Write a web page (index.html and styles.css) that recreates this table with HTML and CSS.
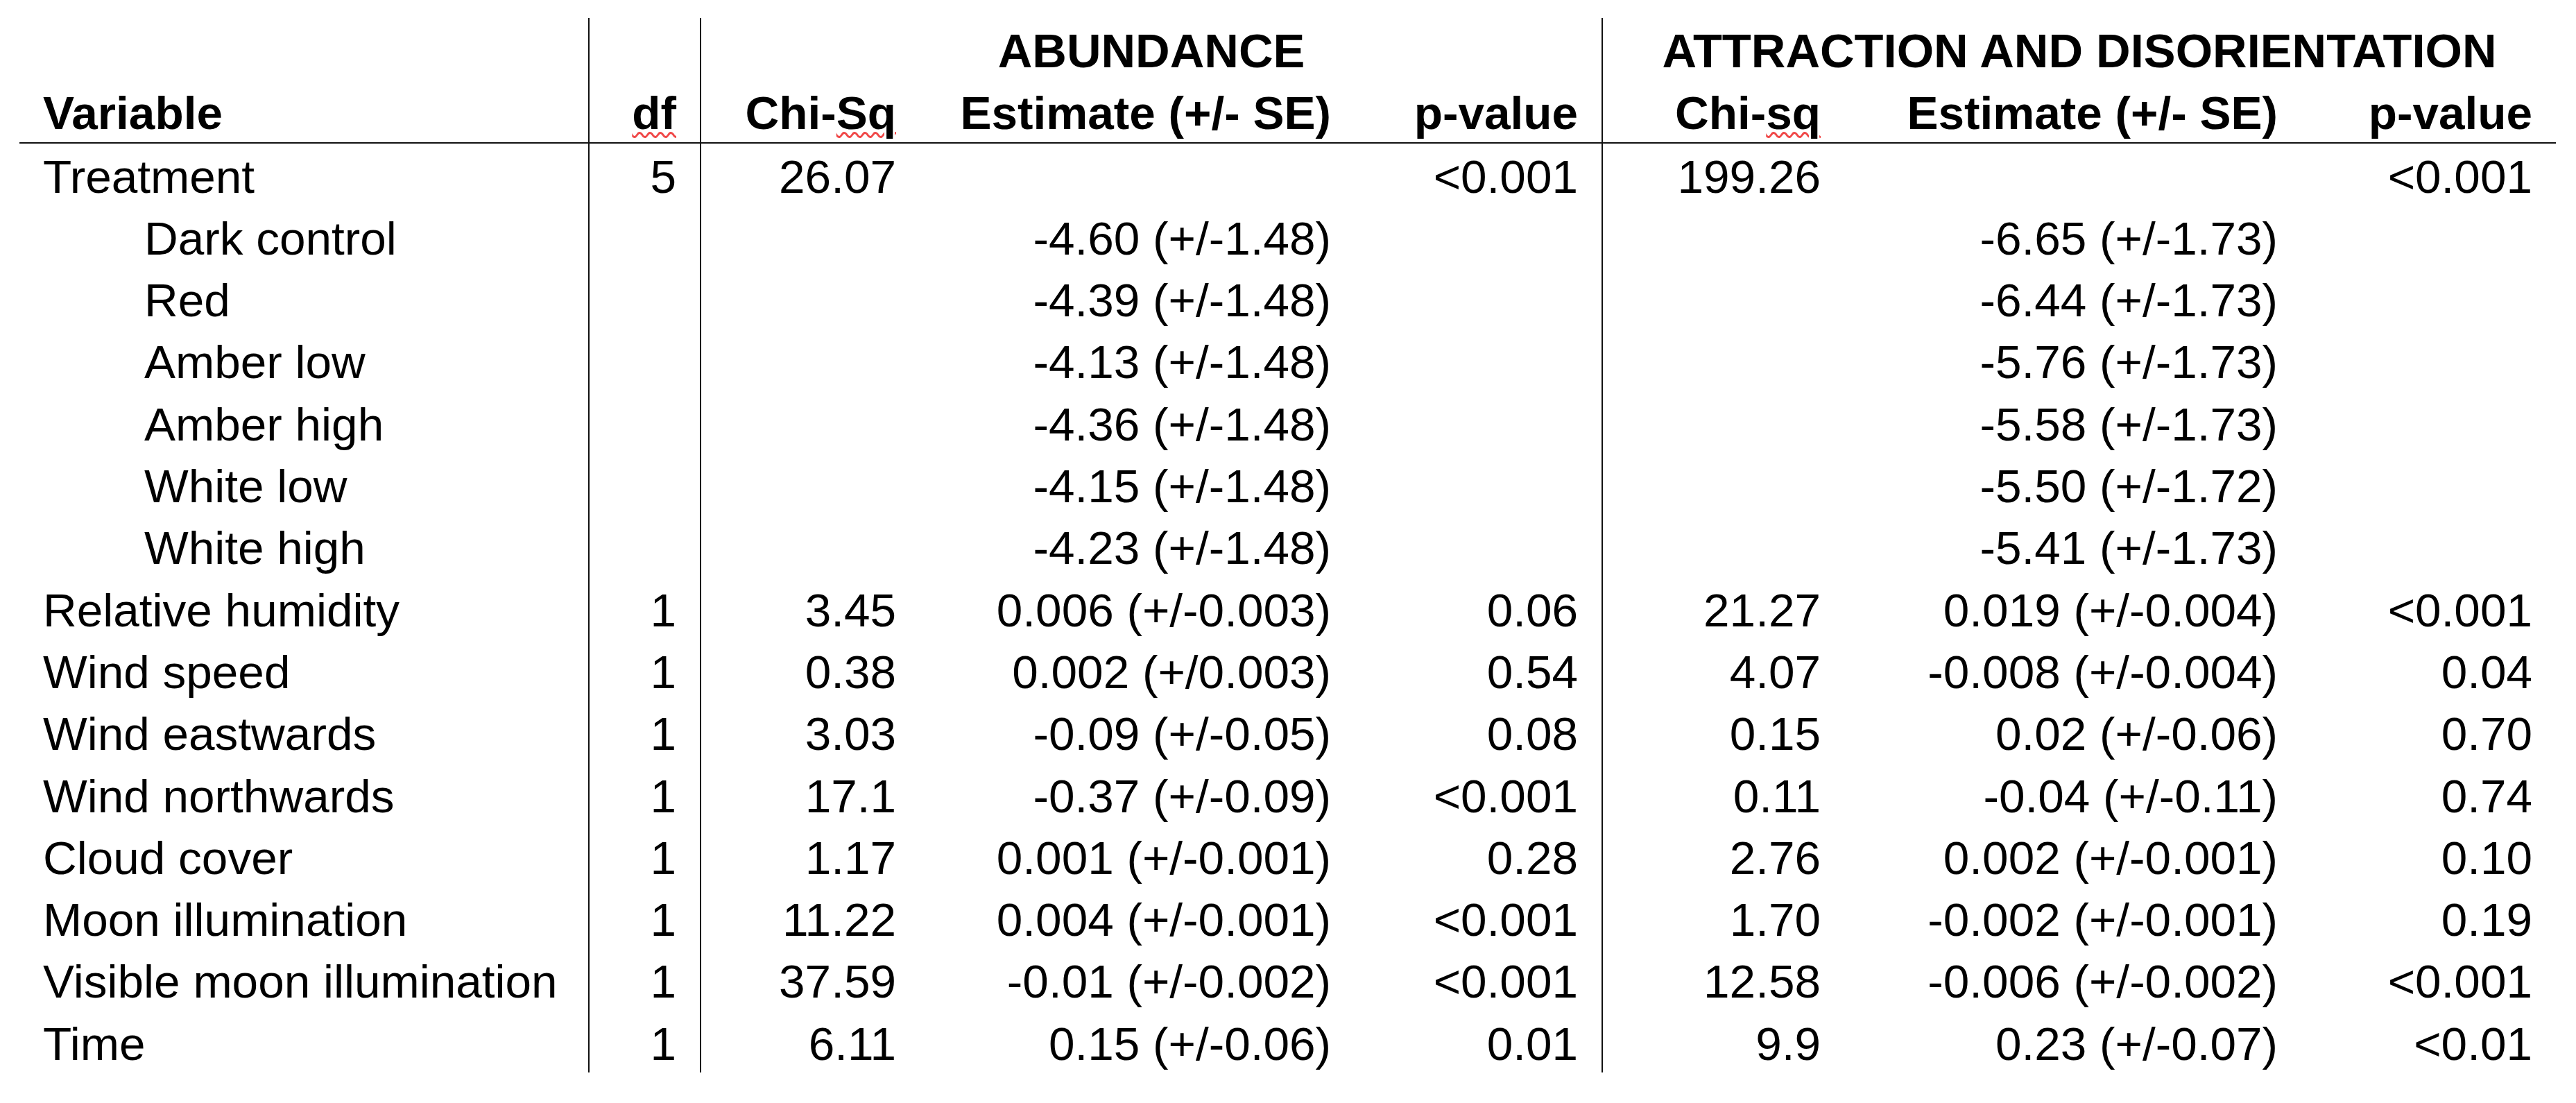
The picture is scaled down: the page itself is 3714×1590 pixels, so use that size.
FILE: index.html
```html
<!DOCTYPE html>
<html lang="en">
<head>
<meta charset="utf-8">
<title>Model results</title>
<link rel="stylesheet" href="styles.css">
</head>
<body>
<table class="results">
  <colgroup>
    <col class="c-var"><col class="c-df"><col class="c-chi1"><col class="c-est1"><col class="c-p1"><col class="c-chi2"><col class="c-est2"><col class="c-p2">
  </colgroup>
  <thead>
    <tr class="group-row">
      <th class="sep"></th>
      <th class="sep"></th>
      <th colspan="3" class="group sep">ABUNDANCE</th>
      <th colspan="3" class="group">ATTRACTION AND DISORIENTATION</th>
    </tr>
    <tr class="col-row">
      <th class="name sep">Variable</th>
      <th class="sep"><span class="spell">df</span></th>
      <th>Chi-<span class="spell">Sq</span></th>
      <th>Estimate (+/- SE)</th>
      <th class="sep">p-value</th>
      <th>Chi-<span class="spell">sq</span></th>
      <th>Estimate (+/- SE)</th>
      <th>p-value</th>
    </tr>
  </thead>
  <tbody>
    <tr><td class="name sep">Treatment</td><td class="sep">5</td><td>26.07</td><td></td><td class="sep">&lt;0.001</td><td>199.26</td><td></td><td>&lt;0.001</td></tr>
    <tr><td class="name sub sep">Dark control</td><td class="sep"></td><td></td><td>-4.60 (+/-1.48)</td><td class="sep"></td><td></td><td>-6.65 (+/-1.73)</td><td></td></tr>
    <tr><td class="name sub sep">Red</td><td class="sep"></td><td></td><td>-4.39 (+/-1.48)</td><td class="sep"></td><td></td><td>-6.44 (+/-1.73)</td><td></td></tr>
    <tr><td class="name sub sep">Amber low</td><td class="sep"></td><td></td><td>-4.13 (+/-1.48)</td><td class="sep"></td><td></td><td>-5.76 (+/-1.73)</td><td></td></tr>
    <tr><td class="name sub sep">Amber high</td><td class="sep"></td><td></td><td>-4.36 (+/-1.48)</td><td class="sep"></td><td></td><td>-5.58 (+/-1.73)</td><td></td></tr>
    <tr><td class="name sub sep">White low</td><td class="sep"></td><td></td><td>-4.15 (+/-1.48)</td><td class="sep"></td><td></td><td>-5.50 (+/-1.72)</td><td></td></tr>
    <tr><td class="name sub sep">White high</td><td class="sep"></td><td></td><td>-4.23 (+/-1.48)</td><td class="sep"></td><td></td><td>-5.41 (+/-1.73)</td><td></td></tr>
    <tr><td class="name sep">Relative humidity</td><td class="sep">1</td><td>3.45</td><td>0.006 (+/-0.003)</td><td class="sep">0.06</td><td>21.27</td><td>0.019 (+/-0.004)</td><td>&lt;0.001</td></tr>
    <tr><td class="name sep">Wind speed</td><td class="sep">1</td><td>0.38</td><td>0.002 (+/0.003)</td><td class="sep">0.54</td><td>4.07</td><td>-0.008 (+/-0.004)</td><td>0.04</td></tr>
    <tr><td class="name sep">Wind eastwards</td><td class="sep">1</td><td>3.03</td><td>-0.09 (+/-0.05)</td><td class="sep">0.08</td><td>0.15</td><td>0.02 (+/-0.06)</td><td>0.70</td></tr>
    <tr><td class="name sep">Wind northwards</td><td class="sep">1</td><td>17.1</td><td>-0.37 (+/-0.09)</td><td class="sep">&lt;0.001</td><td>0.11</td><td>-0.04 (+/-0.11)</td><td>0.74</td></tr>
    <tr><td class="name sep">Cloud cover</td><td class="sep">1</td><td>1.17</td><td>0.001 (+/-0.001)</td><td class="sep">0.28</td><td>2.76</td><td>0.002 (+/-0.001)</td><td>0.10</td></tr>
    <tr><td class="name sep">Moon illumination</td><td class="sep">1</td><td>11.22</td><td>0.004 (+/-0.001)</td><td class="sep">&lt;0.001</td><td>1.70</td><td>-0.002 (+/-0.001)</td><td>0.19</td></tr>
    <tr><td class="name sep">Visible moon illumination</td><td class="sep">1</td><td>37.59</td><td>-0.01 (+/-0.002)</td><td class="sep">&lt;0.001</td><td>12.58</td><td>-0.006 (+/-0.002)</td><td>&lt;0.001</td></tr>
    <tr><td class="name sep">Time</td><td class="sep">1</td><td>6.11</td><td>0.15 (+/-0.06)</td><td class="sep">0.01</td><td>9.9</td><td>0.23 (+/-0.07)</td><td>&lt;0.01</td></tr>
  </tbody>
</table>
</body>
</html>
```

FILE: styles.css
```css
html, body {
  margin: 0;
  padding: 0;
  background: #ffffff;
}

body {
  padding: 26px 0 0 28px;
  font-family: "Liberation Sans", Arial, sans-serif;
  color: #000000;
}

.results {
  border-collapse: collapse;
  table-layout: fixed;
  width: 3657px;
  font-size: 67.5px;
}

.c-var { width: 821px; }
.c-df { width: 161px; }
.c-chi1 { width: 316px; }
.c-est1 { width: 627px; }
.c-p1 { width: 357px; }
.c-chi2 { width: 349px; }
.c-est2 { width: 659px; }
.c-p2 { width: 367px; }

.results th,
.results td {
  padding: 6px 34px 0 0;
  line-height: 83.3px;
  height: 83.3px;
  text-align: right;
  white-space: nowrap;
  vertical-align: top;
}

.results th {
  font-weight: bold;
}

.results .name {
  text-align: left;
  padding-left: 34px;
}

.results .sub {
  padding-left: 180px;
}

.results .group {
  text-align: center;
  padding-right: 0;
  font-size: 68.7px;
}

.results .sep {
  border-right: 2px solid #111111;
}

.col-row th {
  border-bottom: 2px solid #111111;
}

.spell {
  text-decoration-line: underline;
  text-decoration-style: wavy;
  text-decoration-color: #f04848;
  text-decoration-thickness: 3px;
  text-underline-offset: 4px;
}
```
